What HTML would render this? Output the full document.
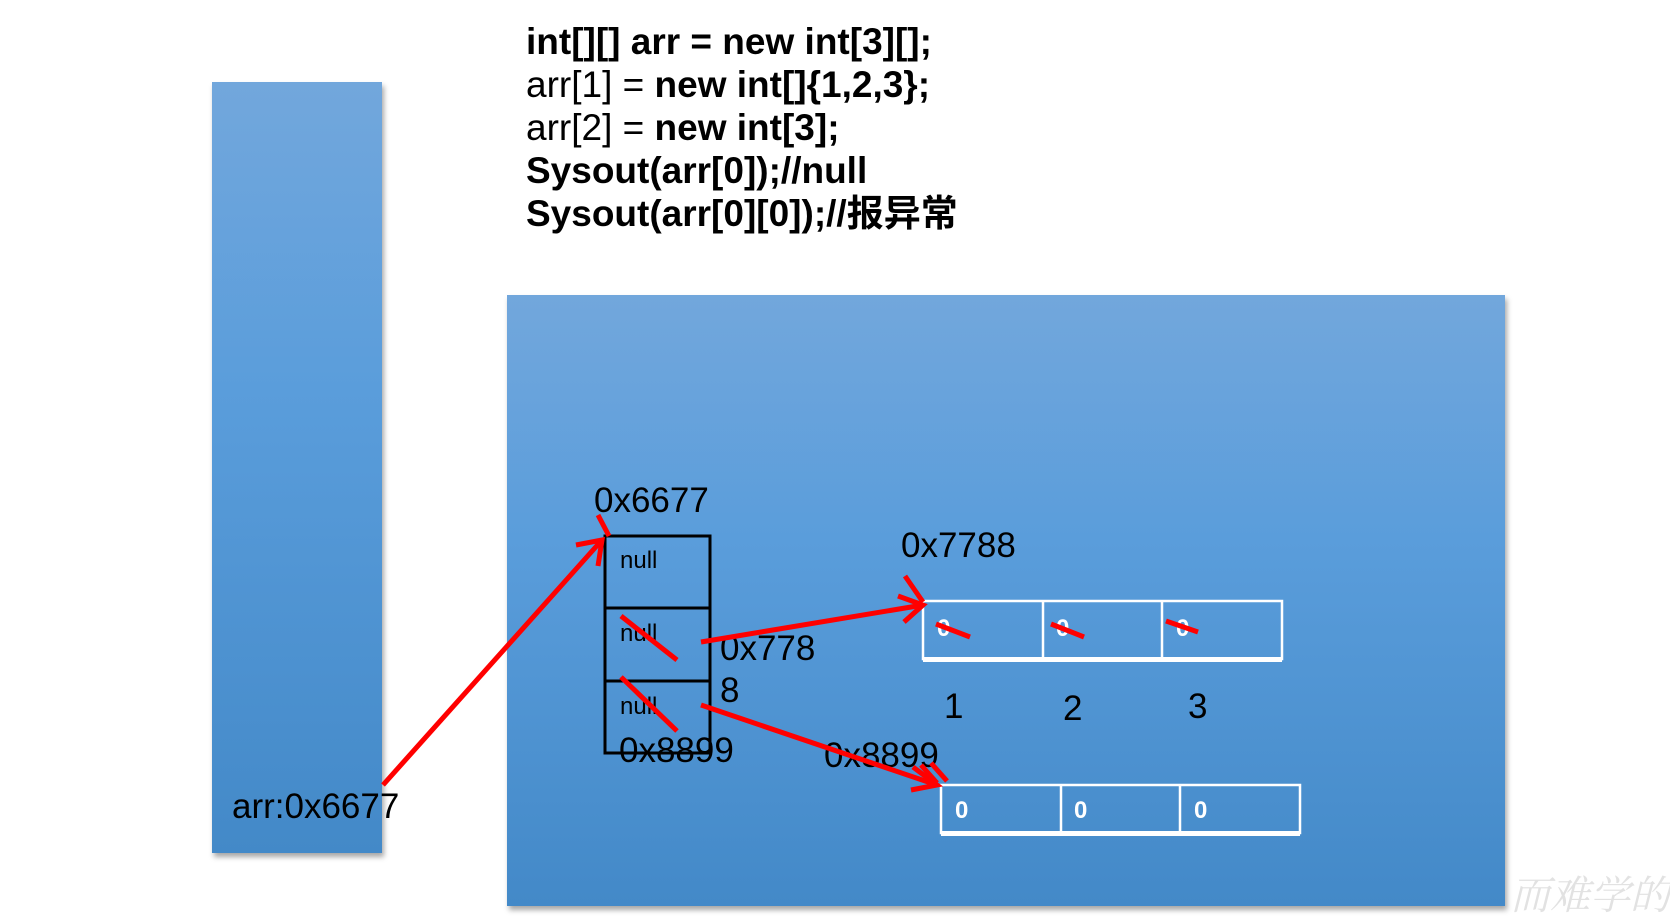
<!DOCTYPE html>
<html><head><meta charset="utf-8"><style>
html,body{margin:0;padding:0;width:1670px;height:916px;overflow:hidden;background:#fff;position:relative;font-family:"Liberation Sans","Noto Sans CJK SC",sans-serif}
.bar{position:absolute;left:212px;top:82px;width:170px;height:771px;background:linear-gradient(#72a7dc,#5a9ddb 40%,#4389c8);box-shadow:2px 4px 5px rgba(0,0,0,.35)}
.big{position:absolute;left:507px;top:295px;width:998px;height:611px;background:linear-gradient(#72a7dc,#5a9ddb 40%,#4389c8);box-shadow:2px 4px 5px rgba(0,0,0,.35)}
.code{position:absolute;left:526px;top:20px;font-size:37px;line-height:43px;color:#000;letter-spacing:0}
.code b{font-weight:bold}
.wm{position:absolute;left:1510px;top:864px;font-family:"Noto Serif CJK SC",serif;font-size:40px;color:#e2e2e2;font-style:italic;white-space:nowrap}
</style></head><body>
<div class="bar"></div>
<div class="big"></div>
<div class="code">
<div><b>int[][] arr = new int[3][];</b></div>
<div>arr[1] = <b>new int[]{1,2,3};</b></div>
<div>arr[2] = <b>new int[3];</b></div>
<div><b>Sysout(arr[0]);//null</b></div>
<div><b>Sysout(arr[0][0]);//报异常</b></div>
</div>
<div class="wm">而难学的是</div>
<svg width="1670" height="916" style="position:absolute;left:0;top:0">
<g font-family="Liberation Sans, sans-serif" fill="#000">
<text x="594" y="512" font-size="35">0x6677</text>
<text x="901" y="557" font-size="35">0x7788</text>
<text x="232" y="818" font-size="35">arr:0x6677</text>
<text x="720" y="660" font-size="35">0x778</text>
<text x="720" y="702" font-size="35">8</text>
<text x="619" y="762" font-size="35">0x8899</text>
<text x="824" y="767" font-size="35">0x8899</text>
<text x="944" y="718" font-size="35">1</text>
<text x="1063" y="720" font-size="35">2</text>
<text x="1188" y="718" font-size="35">3</text>
<text x="620" y="568" font-size="24">null</text>
<text x="620" y="641" font-size="24">null</text>
<text x="620" y="714" font-size="24">null</text>
</g>
<g fill="none" stroke="#000" stroke-width="3">
<rect x="605" y="536" width="105" height="217"/>
<line x1="605" y1="608" x2="710" y2="608"/>
<line x1="605" y1="681" x2="710" y2="681"/>
</g>
<g fill="none" stroke="#fff" stroke-width="2.5">
<rect x="923" y="601" width="359" height="58"/>
<line x1="1043" y1="601" x2="1043" y2="662"/>
<line x1="1162" y1="601" x2="1162" y2="662"/>
<rect x="941" y="785" width="359" height="48"/>
<line x1="1061" y1="785" x2="1061" y2="836"/>
<line x1="1180" y1="785" x2="1180" y2="836"/>
</g>
<rect x="923" y="657" width="359" height="5" fill="#fff"/>
<rect x="941" y="831" width="359" height="5" fill="#fff"/>
<g font-family="Liberation Sans, sans-serif" font-weight="bold" fill="#fff" font-size="24">
<text x="937" y="636">0</text><text x="1056" y="636">0</text><text x="1176" y="636">0</text>
<text x="955" y="818">0</text><text x="1074" y="818">0</text><text x="1194" y="818">0</text>
</g>
<g stroke="#f00" stroke-width="5" fill="none" stroke-linecap="butt">
<line x1="383" y1="785" x2="602" y2="540"/>
<polyline points="576,545 602,540 598,566"/>
<line x1="598" y1="515" x2="609" y2="536"/>
<line x1="701" y1="642" x2="923" y2="605"/>
<polyline points="898,596 923,605 904,622"/>
<line x1="905" y1="576" x2="923" y2="602"/>
<line x1="701" y1="705" x2="937" y2="785"/>
<polyline points="913,767 937,785 911,790"/>
<line x1="921" y1="765" x2="937" y2="783"/>
<line x1="931" y1="763" x2="947" y2="781"/>
<line x1="621" y1="616" x2="677" y2="660"/>
<line x1="621" y1="677" x2="677" y2="731"/>
<line x1="936" y1="624" x2="970" y2="637"/>
<line x1="1051" y1="624" x2="1084" y2="637"/>
<line x1="1166" y1="621" x2="1198" y2="632"/>
</g>
</svg>
</body></html>
